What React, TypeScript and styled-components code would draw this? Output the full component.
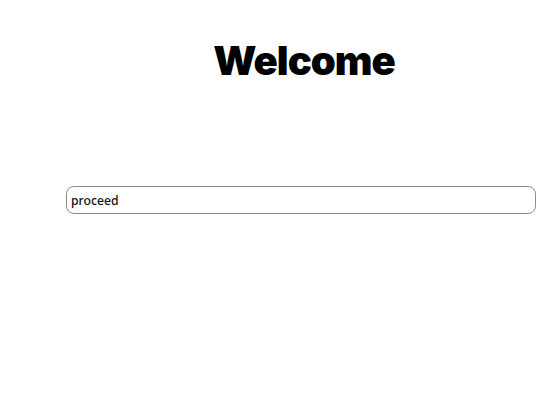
import styled, { createGlobalStyle } from 'styled-components';

const GlobalStyle = createGlobalStyle`
  body {
    margin: 0;
    background: #ffffff;
    font-family: "Noto Sans", "Open Sans", sans-serif;
  }
`;

const Page = styled.div`
  display: flex;
  flex-direction: column;
  width: 470px;
  padding-left: 66px;
`;

const Title = styled.h1`
  margin: 37px 0 0 6px;
  text-align: center;
  font-family: Inter, "Noto Sans", sans-serif;
  font-weight: 900;
  font-size: 40px;
  line-height: 48px;
  letter-spacing: -1px;
  color: #000;
`;

const CommandInput = styled.input`
  margin-top: 101px;
  box-sizing: border-box;
  width: 470px;
  height: 28px;
  padding: 0 4px;
  border: 1px solid #8a8a8a;
  border-radius: 8px;
  font-family: "Noto Sans", "Open Sans", sans-serif;
  font-weight: 500;
  font-size: 12.2px;
  color: #111;
  outline: none;
`;

export default function App() {
  return (
    <>
      <GlobalStyle />
      <Page>
        <Title>Welcome</Title>
        <CommandInput defaultValue="proceed" />
      </Page>
    </>
  );
}
